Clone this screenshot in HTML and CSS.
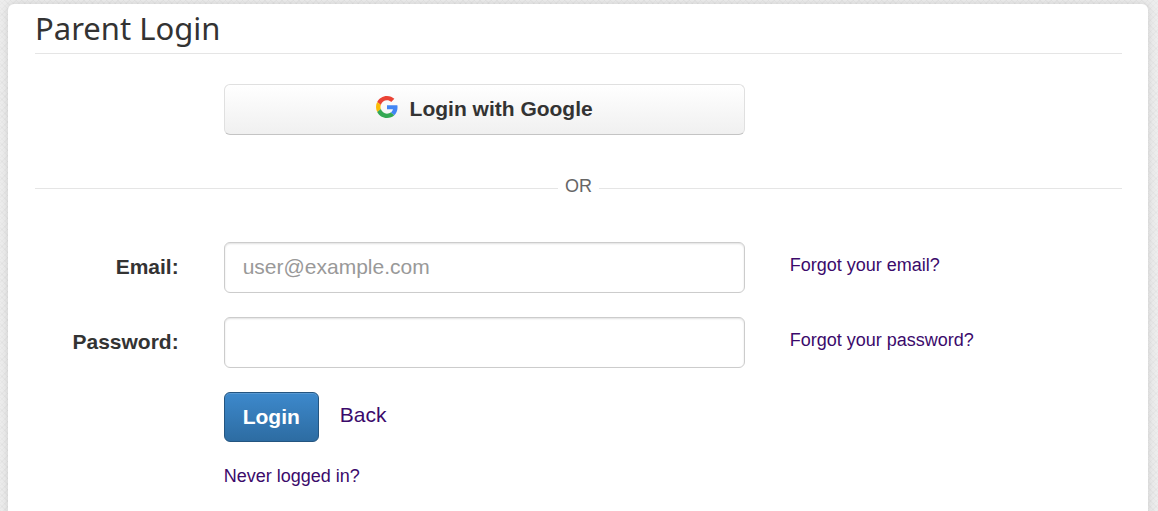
FILE: index.html
```
<!DOCTYPE html>
<html lang="en">
<head>
    <meta charset="UTF-8">
    <meta name="viewport" content="width=device-width, initial-scale=1.0">
    <title>Parent Login</title>
    <link rel="stylesheet" href="styles.css">
</head>
<body>
    <main class="panel">
        <h1 class="page-title">Parent Login</h1>

        <div class="form-row">
            <button type="button" class="btn btn-google">
                <svg class="google-icon" viewBox="0 0 48 48" aria-hidden="true">
                    <path fill="#ea4335" d="M24 9.5c3.54 0 6.71 1.22 9.21 3.6l6.85-6.85C35.9 2.38 30.47 0 24 0 14.62 0 6.51 5.38 2.56 13.22l7.98 6.19C12.43 13.72 17.74 9.5 24 9.5z"/>
                    <path fill="#4285f4" d="M46.98 24.55c0-1.57-.15-3.09-.38-4.55H24v9.02h12.94c-.58 2.96-2.26 5.48-4.78 7.18l7.73 6c4.51-4.18 7.09-10.36 7.09-17.65z"/>
                    <path fill="#fbbc05" d="M10.53 28.59c-.48-1.45-.76-2.99-.76-4.59s.27-3.14.76-4.59l-7.98-6.19C.92 16.46 0 20.12 0 24s.92 7.54 2.56 10.78l7.97-6.19z"/>
                    <path fill="#34a853" d="M24 48c6.48 0 11.93-2.13 15.89-5.81l-7.73-6c-2.15 1.45-4.92 2.3-8.16 2.3-6.26 0-11.57-4.22-13.47-9.91l-7.98 6.19C6.51 42.62 14.62 48 24 48z"/>
                </svg>
                <span>Login with Google</span>
            </button>
        </div>

        <div class="divider"><span>OR</span></div>

        <form>
            <div class="form-row">
                <label for="email">Email:</label>
                <input type="email" id="email" class="form-control" placeholder="user@example.com">
                <a href="#" class="help-link">Forgot your email?</a>
            </div>
            <div class="form-row">
                <label for="password">Password:</label>
                <input type="password" id="password" class="form-control">
                <a href="#" class="help-link">Forgot your password?</a>
            </div>
            <div class="form-row">
                <div class="actions">
                    <button type="submit" class="btn btn-primary">Login</button>
                    <a href="#" class="back-link">Back</a>
                </div>
            </div>
            <div class="form-row">
                <a href="#" class="first-login">Never logged in?</a>
            </div>
        </form>
    </main>
</body>
</html>
```
FILE: styles.css
```
* {box-sizing:border-box;}
html {height:100%;}

body {
    display:flex;
    min-height:100%;
    margin:0;
    padding:4px 10px 0 8px;
    font-family:"Liberation Sans", Arial, sans-serif;
    font-size:21px;
    line-height:30px;
    color:#333;
    background-color:#ededed;
    background-image:
        repeating-linear-gradient(45deg, rgba(0,0,0,0.02) 0 1px, transparent 1px 4px),
        repeating-linear-gradient(-45deg, rgba(0,0,0,0.02) 0 1px, transparent 1px 4px);
}

a {color:#3b0a6b;text-decoration:none;}
a:hover {text-decoration:underline;}

.panel {
    flex:1;
    padding:0 26px 8px 27px;
    background:#fff;
    border-radius:6px 6px 0 0;
    box-shadow:0 0 8px rgba(0,0,0,0.13);
}

.page-title {
    margin:0 0 30px;
    padding:6px 0;
    border-bottom:1px solid #e5e5e5;
    font-family:"Noto Sans", sans-serif;
    font-size:31px;
    font-weight:400;
    line-height:37px;
}

/* 12 column grid: 2 for the label, 6 for the field, 4 for the help link */
.form-row {
    display:grid;
    grid-template-columns:repeat(12, 1fr);
    column-gap:45px;
    margin-bottom:24px;
}
.form-row label {grid-column:span 2;padding-top:10px;text-align:right;font-weight:700;}
.form-control,
.btn-google,
.actions,
.first-login {grid-column:3 / span 6;}
.help-link {grid-column:span 4;justify-self:start;padding-top:8px;font-size:18px;}

.form-control {
    width:100%;
    height:51px;
    padding:7px 18px 9px;
    border:1px solid #ccc;
    border-radius:6px;
    background:#fff;
    box-shadow:inset 0 1px 2px rgba(0,0,0,0.12);
    font:inherit;
    color:#555;
}
.form-control::placeholder {color:#999;opacity:1;}

.btn {
    padding:8px 18px;
    border:1px solid #ccc;
    border-radius:6px;
    font:inherit;
    font-weight:700;
    cursor:pointer;
}
.btn-google {
    display:flex;
    justify-content:center;
    gap:12px;
    height:51px;
    padding-top:9px;
    border-color:#e0e0e0 #e0e0e0 #c4c4c4;
    background:linear-gradient(#fff, #f0f0f0);
    color:#333;
}
.google-icon {width:22px;height:22px;margin-top:2px;}
.btn-primary {
    height:50px;
    border-color:#245580;
    background:linear-gradient(#3d89cc, #2d6ca2);
    box-shadow:inset 0 1px 0 rgba(255,255,255,0.15);
    color:#fff;
}

.divider {
    display:flex;
    align-items:center;
    gap:7px;
    margin:36px 0 41px;
    font-size:18px;
    color:#666;
}
.divider::before,
.divider::after {content:"";flex:1;height:1px;margin-top:4px;background:#e5e5e5;}

.actions {display:flex;gap:21px;}
.back-link {padding-top:8px;}
.first-login {justify-self:start;margin-top:-5px;font-size:18px;}
```
